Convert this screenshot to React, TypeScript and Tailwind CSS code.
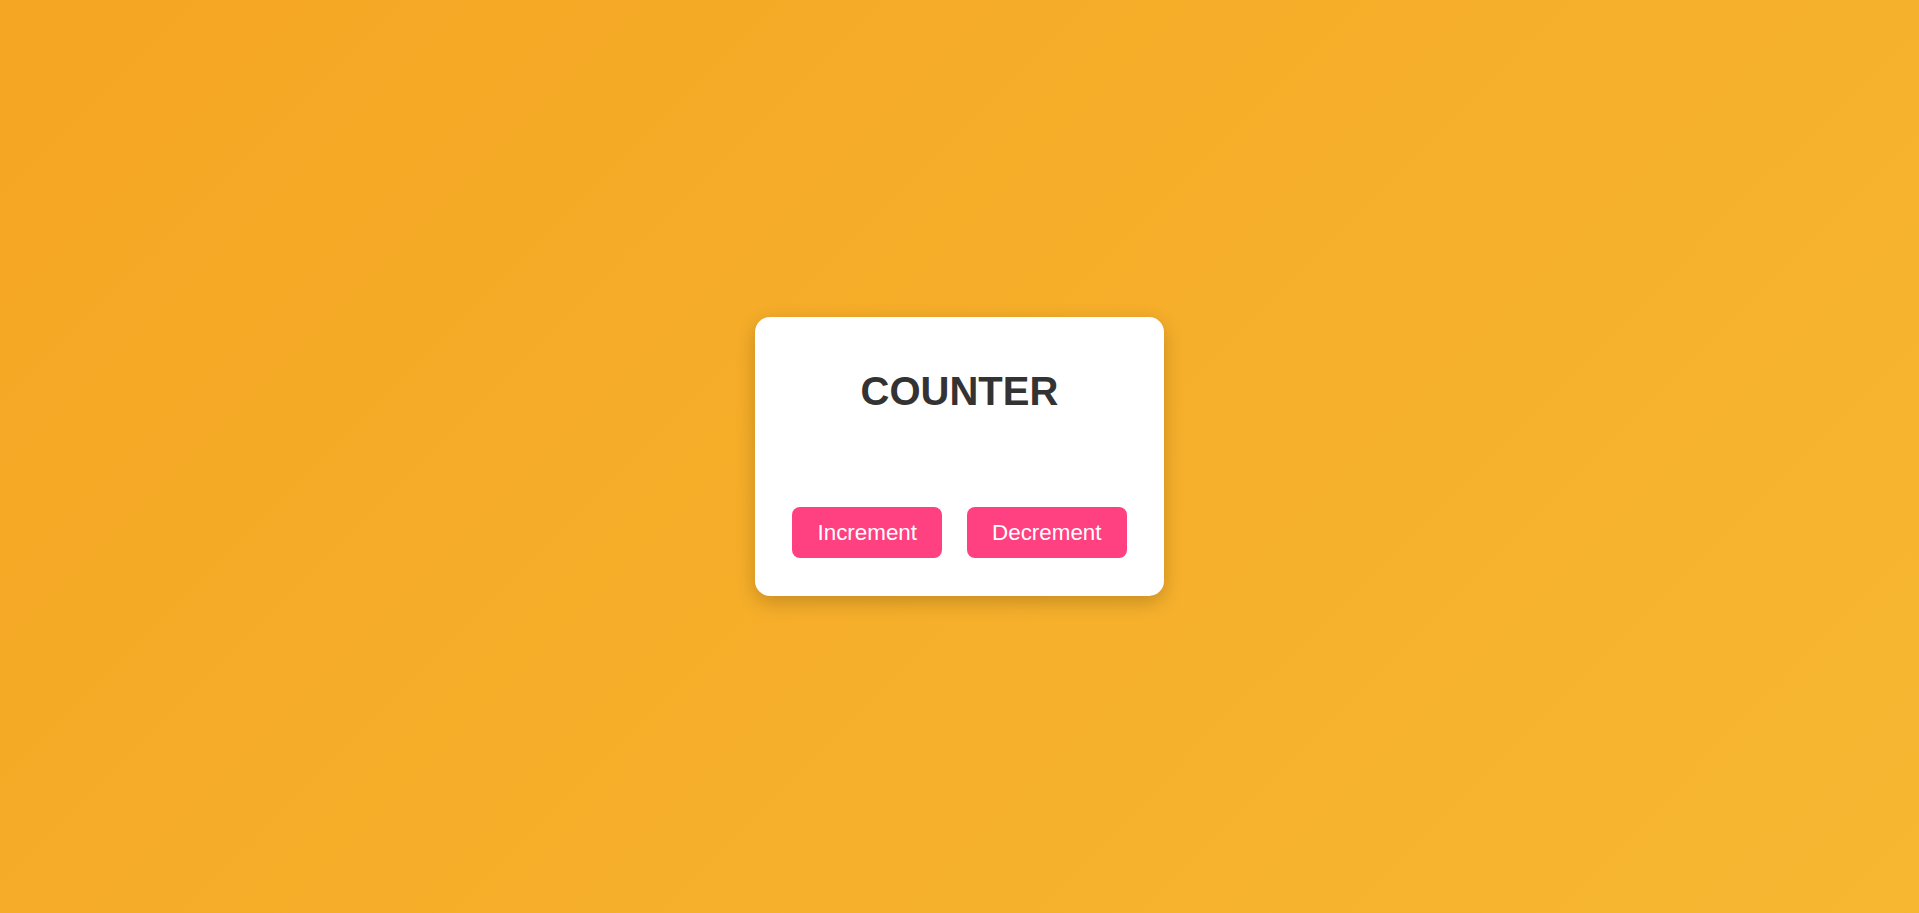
export default function App() {
  return (
    <div
      className="w-full h-[913px] flex items-center justify-center bg-[linear-gradient(135deg,#f5a623_0%,#f7b731_100%)]"
      style={{ fontFamily: '"Liberation Sans", Arial, sans-serif' }}
    >
      <div className="bg-white rounded-[15px] px-[37px] pt-[51px] pb-[38px] shadow-[0_6px_20px_rgba(0,0,0,0.2)] flex flex-col items-center">
        <h1 className="text-[40px] leading-[46px] font-bold text-[#333333] text-center">COUNTER</h1>
        <div className="h-[93px]" />
        <div className="flex gap-[25px]">
          <button className="h-[51px] px-[25px] rounded-[8px] bg-[#ff4081] text-white text-[22.4px] leading-[26px]">
            Increment
          </button>
          <button className="h-[51px] px-[25px] rounded-[8px] bg-[#ff4081] text-white text-[22.4px] leading-[26px]">
            Decrement
          </button>
        </div>
      </div>
    </div>
  );
}
